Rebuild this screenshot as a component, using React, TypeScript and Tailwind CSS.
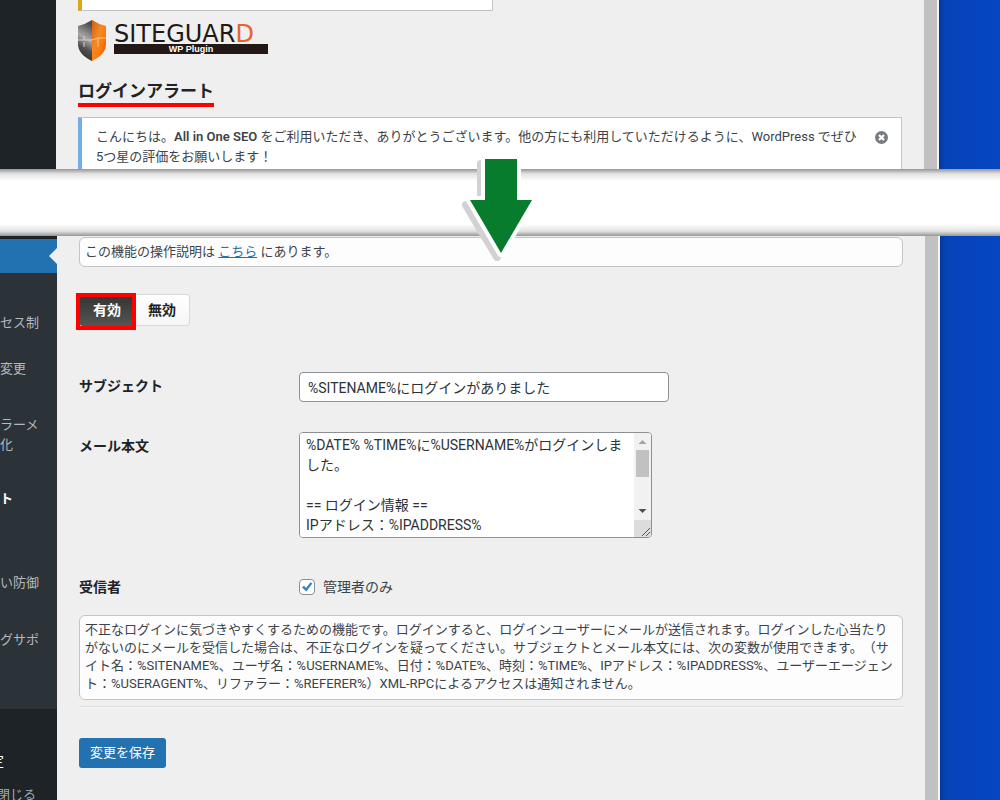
import React from 'react';

const DESKTOP_CLASS = 'flex-1 bg-linear-to-r from-[#03389a] via-[#0543b8] via-10% to-[#0646c2]';

const MENU_ITEMS = [
  { label: 'セス制', className: 'pt-10' },
  { label: '変更', className: 'pt-[26px]' },
  { label: 'ラーメ', className: 'pt-9' },
  { label: '化', className: '' },
  { label: 'ト', className: 'pt-[34px] font-bold text-white' },
  { label: 'い防御', className: 'pt-16' },
  { label: 'グサポ', className: 'pt-[37px]' },
];

const MAIL_BODY = `%DATE% %TIME%に%USERNAME%がログインしま
した。

== ログイン情報 ==
IPアドレス：%IPADDRESS%`;

const Logo: React.FC = () => (
  <div className="flex items-start gap-2">
    <svg width="28" height="41" viewBox="0 0 28 41" aria-hidden="true">
      <defs>
        <linearGradient id="shieldLeft" x1="0.2" y1="1" x2="0.4" y2="0">
          <stop offset="0" stopColor="#2a2a2a" />
          <stop offset="0.35" stopColor="#505050" />
          <stop offset="0.6" stopColor="#a8a8a8" />
          <stop offset="1" stopColor="#4c4c4c" />
        </linearGradient>
        <linearGradient id="shieldRight" x1="0" y1="0" x2="1" y2="1">
          <stop offset="0" stopColor="#d05a1c" />
          <stop offset="0.4" stopColor="#f58a20" />
          <stop offset="0.65" stopColor="#fb7a10" />
          <stop offset="1" stopColor="#e8400f" />
        </linearGradient>
      </defs>
      <path d="M14 0 Q8 4 0 6 V24 C0 32 6 37 14 41 Z" fill="url(#shieldLeft)" />
      <path d="M14 0 Q20 4 28 6 V24 C28 32 22 37 14 41 Z" fill="url(#shieldRight)" />
      <path d="M0 20 H6 V16 M6 22 V27 M6 20 H14" stroke="#d0d0d0" strokeWidth="1" fill="none" />
      <path d="M14 20 L20 18 M20 27 V18 H28" stroke="#ffc48a" strokeWidth="1" fill="none" />
    </svg>
    <div className="w-[154px] pt-1">
      <div className="h-5 font-['DejaVu_Sans',sans-serif] text-[24px] leading-5 text-[#231815]">
        SITEGUAR<span className="text-[#e8622a]">D</span>
      </div>
      <div className="h-[10px] bg-[#231815] text-center font-['Liberation_Sans',sans-serif] text-[9px] leading-[10px] font-bold text-white">
        WP Plugin
      </div>
    </div>
  </div>
);

const PageScrollbar: React.FC = () => (
  <div className="w-[15px] border-r-2 border-[#f4f4f4] bg-[#c1c1c1]" />
);

const DownArrow: React.FC = () => (
  <svg
    className="absolute -top-[14px] left-1/2 z-10 -translate-x-1/2"
    width="76"
    height="110"
    viewBox="462 155 76 110"
    aria-hidden="true"
  >
    <path
      d="M481 164 H513 V205 H528 L497 257 L466 205 H481 Z"
      fill="#d2d2d2"
      stroke="#d2d2d2"
      strokeWidth="8"
      strokeLinejoin="round"
    />
    <path
      d="M485 159 H517 V200 H532 L501 253 L470 200 H485 Z"
      fill="#fff"
      stroke="#fff"
      strokeWidth="8"
      strokeLinejoin="round"
    />
    <path d="M485 159 H517 V200 H532 L501 253 L470 200 H485 Z" fill="#067c2c" />
  </svg>
);

const MailBodyField: React.FC = () => (
  <div className="flex h-[106px] w-[353px] overflow-hidden rounded border border-[#8c8f94] bg-white">
    <textarea
      id="mail-body"
      className="flex-1 resize-none overflow-hidden bg-white px-[6px] py-[2px] text-sm leading-5 whitespace-pre text-[#2c3338] outline-none"
      defaultValue={MAIL_BODY}
    />
    <div className="flex w-[17px] flex-col items-center bg-[#f1f1f1]">
      <svg width="17" height="17" viewBox="0 0 17 17">
        <path d="M4.5 11 L8.5 7 L12.5 11 Z" fill="#a3a3a3" />
      </svg>
      <div className="h-[27px] w-[13px] bg-[#c1c1c1]" />
      <div className="flex-1" />
      <svg width="17" height="17" viewBox="0 0 17 17">
        <path d="M4.5 6 L8.5 10 L12.5 6 Z" fill="#505050" />
      </svg>
      <svg className="bg-[#dcdcdc]" width="17" height="17" viewBox="0 0 17 17">
        <path d="M8 16 L16 8 M12 16 L16 12" stroke="#555" strokeWidth="1" />
      </svg>
    </div>
  </div>
);

export default function App() {
  return (
    <div className="flex min-h-screen flex-col bg-white font-['Roboto','Noto_Sans_CJK_JP',sans-serif] text-[13px] text-[#3c434a] [text-spacing-trim:space-all]">
      {/* Top of the settings page */}
      <section className="flex h-[169px] overflow-hidden">
        <aside className="w-14 bg-[#1d2327] pt-[141px]">
          <div className="flex w-[2px] justify-end overflow-hidden text-sm leading-5 text-white">ミ</div>
        </aside>
        <main className="w-[868px] bg-[#efefef] px-[22px]">
          <div className="h-[11px] w-[415px] border-r border-b border-l-4 border-[#c3c4c7] border-l-[#dba617] bg-white" />
          <div className="pt-[9px]">
            <Logo />
          </div>
          <h1 className="mt-[18px] inline-block h-7 border-b-4 border-[#ff0000] text-[17px] leading-6 font-semibold text-[#1d2327]">
            ログインアラート
          </h1>
          <div className="mt-[10px] flex justify-between border border-l-4 border-[#c3c4c7] border-l-[#72aee6] bg-white py-[9px] pr-[13px] pl-[14px]">
            <p className="leading-5 whitespace-nowrap">
              こんにちは。<strong className="font-semibold">All in One SEO</strong>{' '}
              をご利用いただき、ありがとうございます。他の方にも利用していただけるように、WordPress でぜひ
              <br />
              5つ星の評価をお願いします！
            </p>
            <button type="button" aria-label="閉じる" className="mt-1 h-[13px] w-[13px]">
              <svg width="13" height="13" viewBox="0 0 13 13">
                <circle cx="6.5" cy="6.5" r="6.5" fill="#787c82" />
                <path d="M4 4 L9 9 M9 4 L4 9" stroke="#fff" strokeWidth="2.2" />
              </svg>
            </button>
          </div>
        </main>
        <PageScrollbar />
        <div className={DESKTOP_CLASS} />
      </section>

      {/* Gap between the two captures */}
      <div className="relative flex h-[67px] flex-col justify-between bg-white">
        <div className="h-3 bg-linear-to-b from-[#969696] via-[#e2e2e2] via-40% to-white" />
        <div className="h-3 bg-linear-to-t from-[#969696] via-[#e2e2e2] via-40% to-white" />
        <DownArrow />
      </div>

      {/* Login alert form */}
      <section className="flex flex-1">
        <aside className="flex w-[57px] flex-col bg-[#1d2327] pt-[3px] leading-5">
          <div className="flex h-[34px] items-center justify-end bg-[#2271b1]">
            <svg width="8" height="16" viewBox="0 0 8 16">
              <path d="M8 0 L0 8 L8 16 Z" fill="#efefef" />
            </svg>
          </div>
          <ul className="h-[436px] bg-[#2c3338] text-[#b4b9be]">
            {MENU_ITEMS.map(item => (
              <li key={item.label} className={item.className}>{item.label}</li>
            ))}
          </ul>
          <div className="flex w-1 justify-end overflow-hidden pt-[42px] text-sm leading-5 text-white">定</div>
          <div className="flex w-9 justify-end overflow-hidden pt-[14px] whitespace-nowrap text-[#a7aaad]">閉じる</div>
        </aside>

        <main className="w-[868px] bg-[#efefef] px-[22px] pt-px">
          <p className="h-[30px] rounded-md border border-[#c3c4c7] bg-[#fdfdfd] px-[5px] leading-7">
            この機能の操作説明は <a href="#" className="text-[#2271b1] underline">こちら</a> にあります。
          </p>

          <div className="mt-[27px] flex h-8 text-sm font-bold">
            <div className="relative">
              <button type="button" aria-pressed="true" className="h-8 w-14 rounded-l bg-linear-to-b from-[#333] to-[#555] text-white">
                有効
              </button>
              <div className="pointer-events-none absolute -top-px -right-px -bottom-1 -left-[3px] border-4 border-[#ff0000]" />
            </div>
            <button type="button" aria-pressed="false" className="h-8 w-[55px] rounded-r border border-l-0 border-[#d9d9d9] bg-linear-to-b from-white to-[#f6f6f6] text-[#222]">
              無効
            </button>
          </div>

          <form onSubmit={e => e.preventDefault()}>
            <div className="mt-[46px] flex">
              <label htmlFor="subject" className="w-[220px] text-sm leading-7 font-semibold text-[#1d2327]">サブジェクト</label>
              <input
                id="subject"
                type="text"
                defaultValue="%SITENAME%にログインがありました"
                className="h-[30px] w-[370px] rounded border border-[#8c8f94] bg-white px-2 text-sm text-[#2c3338]"
              />
            </div>

            <div className="mt-[30px] flex">
              <label htmlFor="mail-body" className="w-[220px] text-sm leading-7 font-semibold text-[#1d2327]">メール本文</label>
              <MailBodyField />
            </div>

            <div className="mt-[41px] flex h-4 items-center">
              <span className="w-[220px] text-sm font-semibold text-[#1d2327]">受信者</span>
              <label className="flex items-center gap-2 text-sm">
                <span className="grid">
                  <input
                    type="checkbox"
                    defaultChecked
                    className="col-start-1 row-start-1 h-4 w-4 appearance-none rounded border border-[#8c8f94] bg-white"
                  />
                  <svg className="pointer-events-none col-start-1 row-start-1" width="16" height="16" viewBox="0 0 16 16">
                    <path d="M3 8.5 L5 6.8 L7 9 L11.5 3.3 L13.3 4.5 L7.4 12.5 Z" fill="#3582c4" />
                  </svg>
                </span>
                管理者のみ
              </label>
            </div>

            <p className="mt-5 h-[85px] rounded-md border border-[#c3c4c7] bg-[#fdfdfd] px-[5px] py-[5px] leading-[18px] whitespace-nowrap">
              不正なログインに気づきやすくするための機能です。ログインすると、ログインユーザーにメールが送信されます。ログインした心当たり
              <br />
              がないのにメールを受信した場合は、不正なログインを疑ってください。サブジェクトとメール本文には、次の変数が使用できます。（サ
              <br />
              イト名：%SITENAME%、ユーザ名：%USERNAME%、日付：%DATE%、時刻：%TIME%、IPアドレス：%IPADDRESS%、ユーザーエージェン
              <br />
              ト：%USERAGENT%、リファラー：%REFERER%）XML-RPCによるアクセスは通知されません。
            </p>
            <hr className="mt-[6px] border-t border-b border-t-[#dcdcde] border-b-[#f6f7f7]" />
            <button type="submit" className="mt-[30px] h-[30px] rounded-[3px] bg-[#2271b1] px-[11px] text-white">
              変更を保存
            </button>
          </form>
        </main>
        <PageScrollbar />
        <div className={DESKTOP_CLASS} />
      </section>
    </div>
  );
}
